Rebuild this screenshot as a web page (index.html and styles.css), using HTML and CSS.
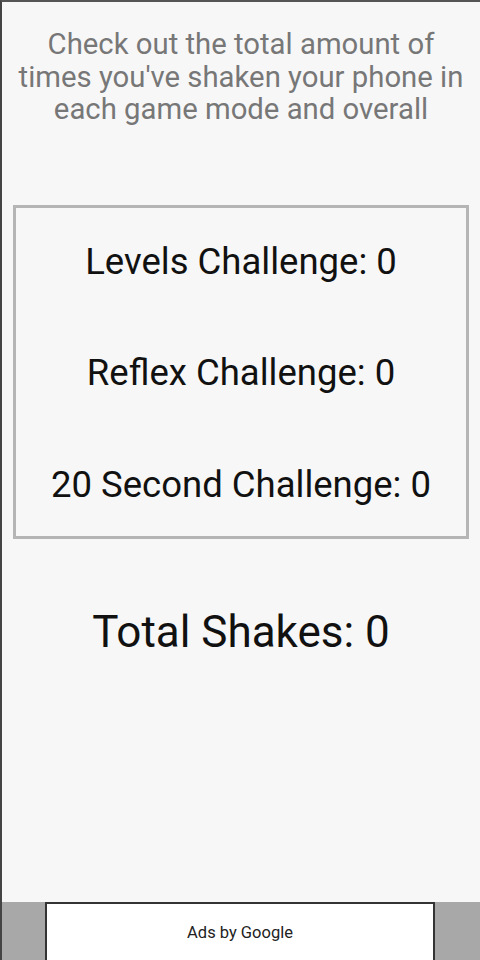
FILE: index.html
```html
<!DOCTYPE html>
<html>
<head>
    <title>Shake Stats</title>
    <meta charset="utf-8">
    <meta name="viewport" content="width=device-width, initial-scale=1">
    <link rel="stylesheet" href="styles.css">
</head>
<body>
<div class="screen">
    <p class="intro">Check out the total amount of<br>times you've shaken your phone in<br>each game mode and overall</p>
    <div class="stats-box">
        <div class="stat">Levels Challenge: 0</div>
        <div class="stat">Reflex Challenge: 0</div>
        <div class="stat">20 Second Challenge: 0</div>
    </div>
    <div class="total">Total Shakes: 0</div>
    <div class="ad-bar">
        <div class="ad-box">Ads by Google</div>
    </div>
</div>
</body>
</html>
```

FILE: styles.css
```css
* {
    box-sizing: border-box;
}

html, body {
    margin: 0;
    height: 100%;
}

body {
    font-family: Roboto, "Noto Sans", Arial, sans-serif;
    background-color: #f7f7f7;
}

.screen {
    height: 960px;
    display: flex;
    flex-direction: column;
    border-top: 2px solid #555;
    border-left: 2px solid #444;
}

.intro {
    margin: 26px 0 0 0;
    font-size: 29.3px;
    line-height: 32.5px;
    color: #777;
    text-align: center;
    white-space: nowrap;
}

.stats-box {
    margin: 79px 11px 0 11px;
    height: 334px;
    border: 3px solid #b5b5b5;
    display: flex;
    flex-direction: column;
    gap: 71.5px;
    padding-top: 34px;
}

.stat {
    font-size: 36.5px;
    line-height: 40px;
    color: #111;
    text-align: center;
}

.total {
    margin-top: 68px;
    font-size: 44px;
    line-height: 50px;
    color: #111;
    text-align: center;
}

.ad-bar {
    margin-top: auto;
    height: 58px;
    background-color: #a8a8a8;
    display: flex;
    justify-content: center;
}

.ad-box {
    width: 390px;
    margin-left: -2px;
    background-color: #fff;
    border: 2px solid #333;
    border-bottom: none;
    font-size: 16.5px;
    color: #222;
    text-align: center;
    padding-top: 19px;
}
```
